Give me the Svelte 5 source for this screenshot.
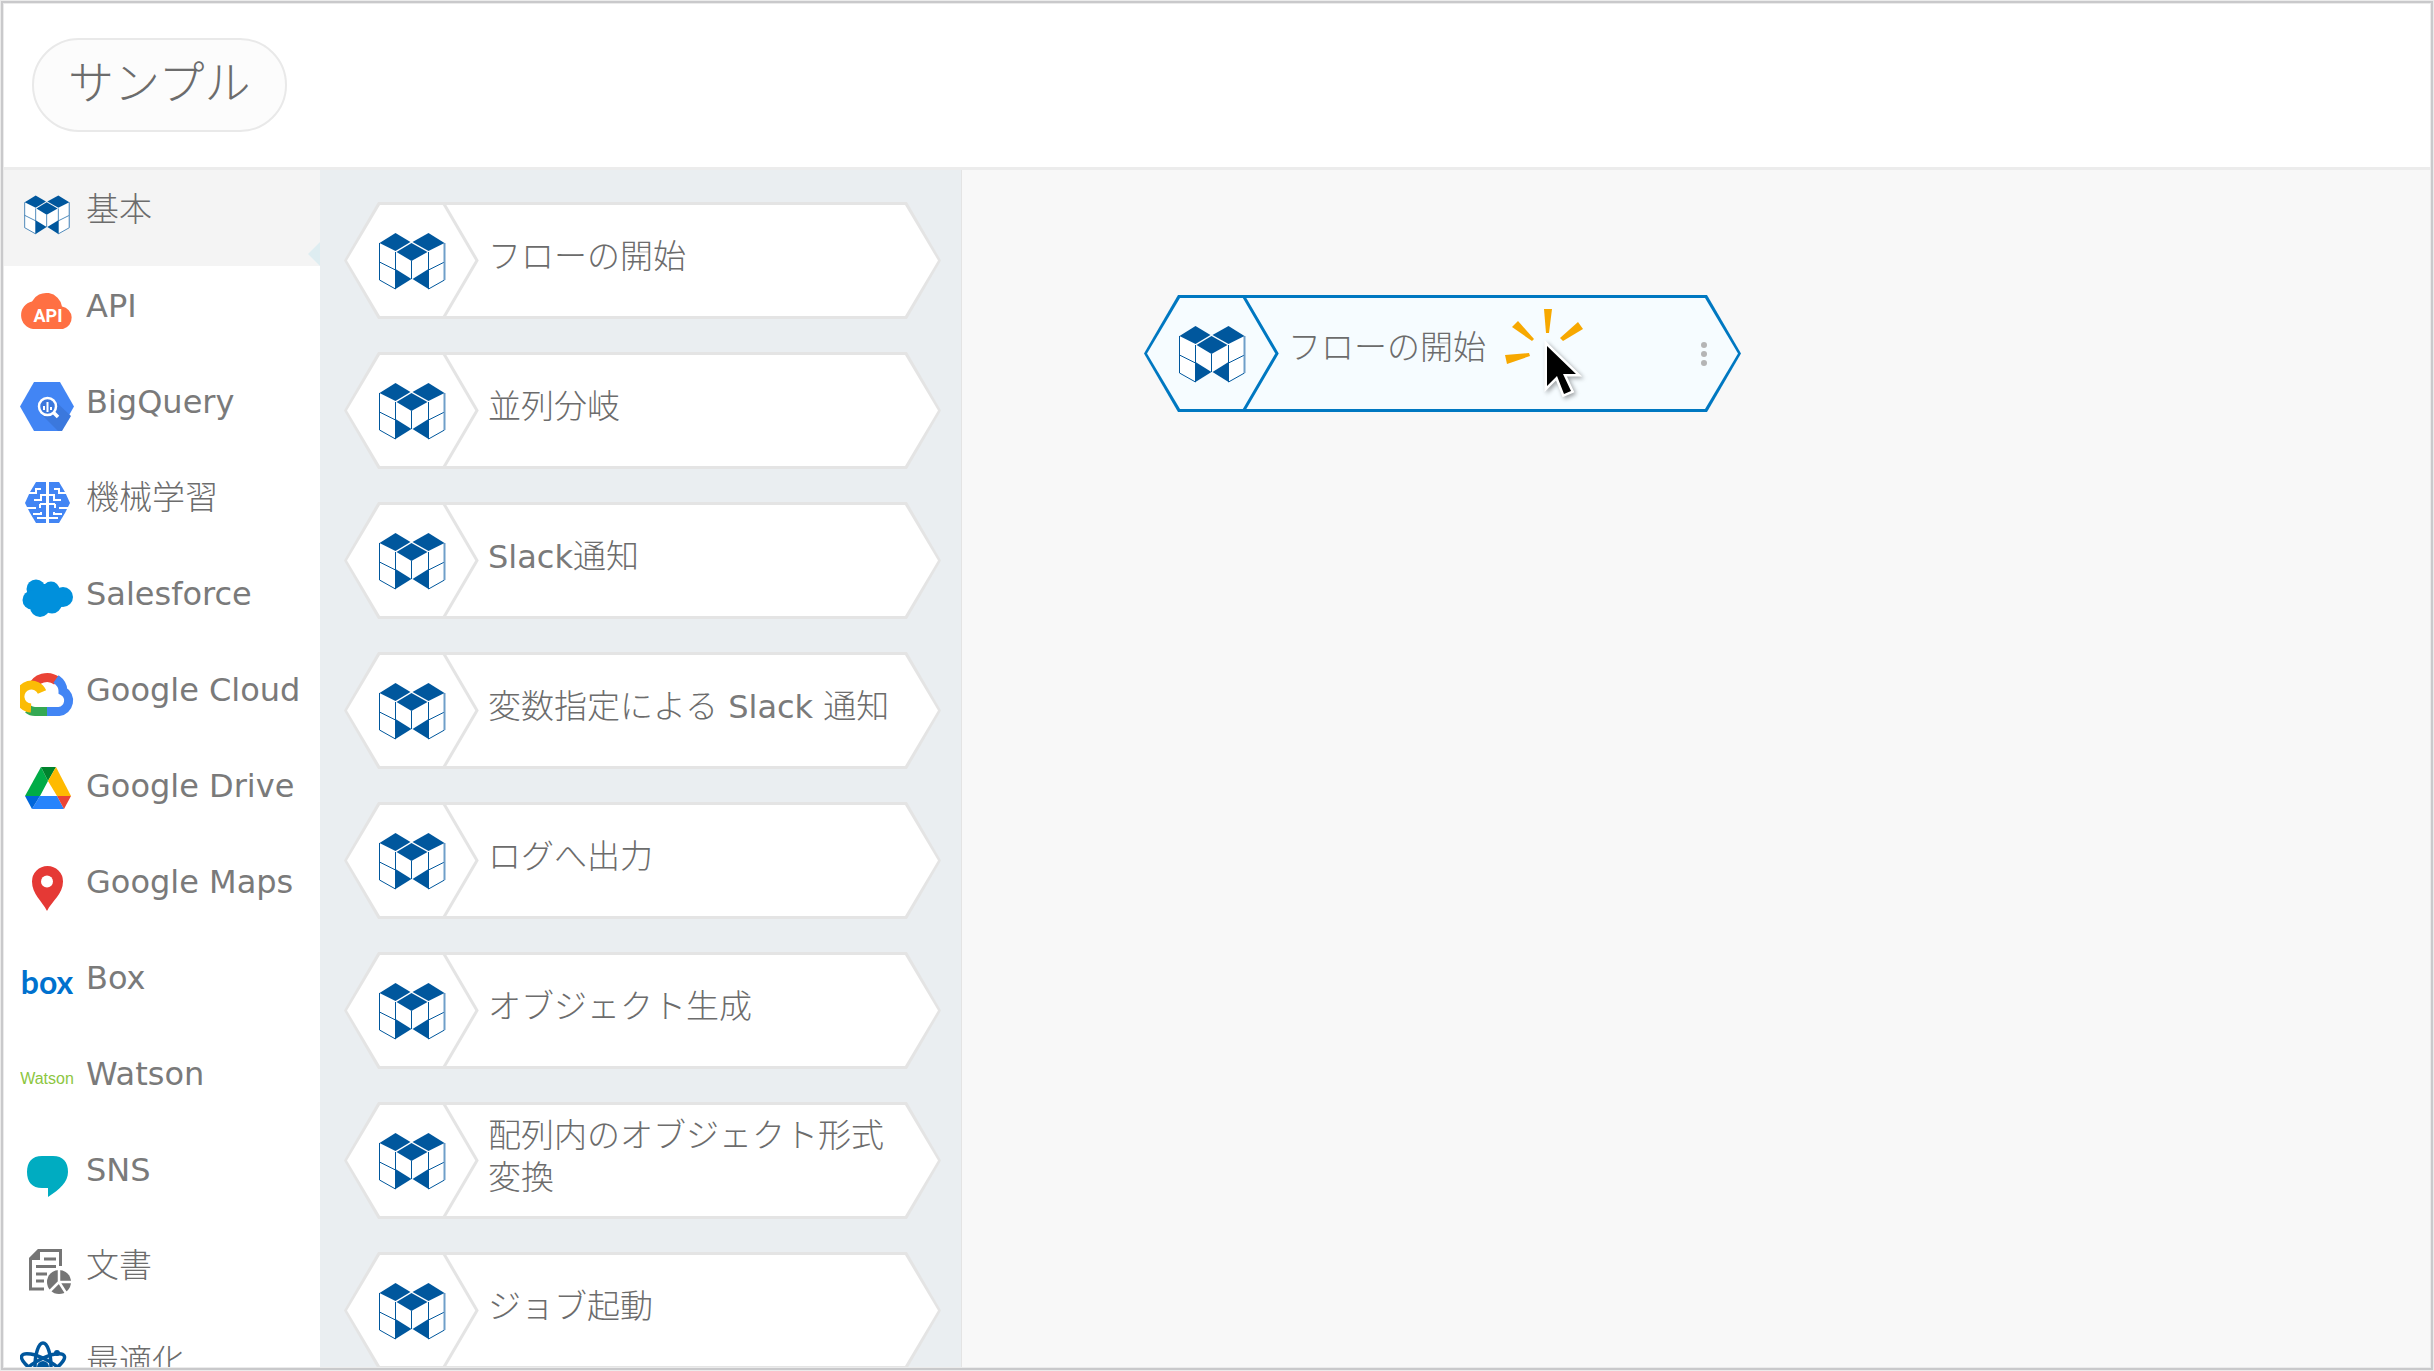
<script>
    const categories = [
        { icon: 'cubes', label: '基本' },
        { icon: 'api', label: 'API' },
        { icon: 'bigquery', label: 'BigQuery' },
        { icon: 'brain', label: '機械学習' },
        { icon: 'salesforce', label: 'Salesforce' },
        { icon: 'gcloud', label: 'Google Cloud' },
        { icon: 'gdrive', label: 'Google Drive' },
        { icon: 'gmaps', label: 'Google Maps' },
        { icon: 'box', label: 'Box' },
        { icon: 'watson', label: 'Watson' },
        { icon: 'sns', label: 'SNS' },
        { icon: 'document', label: '文書' },
        { icon: 'atom', label: '最適化' }
    ];

    const blocks = [
        'フローの開始',
        '並列分岐',
        'Slack通知',
        '変数指定による Slack 通知',
        'ログへ出力',
        'オブジェクト生成',
        '配列内のオブジェクト形式変換',
        'ジョブ起動'
    ];

    let selected = $state('cubes');

    // odd parts are the Latin words
    const splitLatin = (text) => text.split(/([A-Za-z ]+)/);
</script>

{#snippet mixed(text)}
    {#each splitLatin(text) as part, i}{#if i % 2}<span class="latin">{part}</span>{:else}{part}{/if}{/each}
{/snippet}

{#snippet cubes()}
    <svg class="cubes" viewBox="-1 0 67 57" aria-hidden="true">
        <path fill="#fff" d="M0 10L32 19L65 10V47L49 56L32 46L16 56L0 47Z" />
        <g fill="none" stroke="#00579d" stroke-width="1">
            <path d="M0 10V47L16 56V19M0 29L16 37M32 28V46M49 19V56L65 47M65 29L49 37" />
            <path d="M65 10V47" stroke="#6f9fc9" stroke-width="2" />
        </g>
        <g fill="#00579d">
            <path d="M16 0L31 9L16 18L0 10Z" />
            <path d="M49 0L65 10L49 18L33 9Z" />
            <path d="M32 10L48 19L32 28L17 19Z" />
            <path d="M16 36L32 46L16 56Z" />
            <path d="M49 36L33 46L49 56Z" />
        </g>
    </svg>
{/snippet}

{#snippet block(label)}
    <svg class="block-shape" viewBox="0 0 597 117" aria-hidden="true">
        <path class="edge" d="M34 0H563L597 58.5L563 117H34L0 58.5Z" />
        <path class="face" d="M36 3H561L594 58.5L561 114H36L3 58.5Z" />
        <path class="divider" d="M100 2L133 58.5L100 115" />
    </svg>
    <span class="block-icon">{@render cubes()}</span>
    <span class="block-label">{@render mixed(label)}</span>
{/snippet}

{#snippet categoryIcon(name)}
    {#if name === 'cubes'}
        {@render cubes()}
    {:else}
        <svg viewBox="0 0 54 54" aria-hidden="true">
            {#if name === 'api'}
                <path fill="#ff7043" d="M13 45A14 14 0 0 1 12 17.5A16 16 0 0 1 42 22.5A11.5 11.5 0 0 1 43 45Z" />
                <text class="api-text" x="28" y="38" text-anchor="middle">API</text>
            {:else if name === 'bigquery'}
                <path fill="#4285f4" d="M14 2H40L54 26.5L40 51H14L0 26.5Z" />
                <path fill="#3b78dd" d="M34 20L51 36L42 51H38L20 33Z" />
                <circle cx="27.5" cy="26.5" r="8.5" fill="#3b78dd" stroke="#fff" stroke-width="2.5" />
                <path fill="none" stroke="#fff" stroke-width="2" d="M24 26V30M27.5 22V32M31 27V30" />
                <path fill="none" stroke="#fff" stroke-width="3.5" d="M33 32L38 37" />
            {:else if name === 'brain'}
                <path fill="#4285f4" d="M16 6H26V47H16L10 37L5 27L10 16Z" />
                <path fill="#4285f4" d="M29 6H39L45 16L50 27L45 37L39 47H29V6Z" />
                <path fill="none" stroke="#fff" stroke-width="2" d="M8 17H16V13H21M26 19H21V24H14M6 32H16M20 28H26M20 28V32M13 38H21V36M17 42H26M47 17H39V13H34M29 19H34V24H41M49 32H39M35 28H29M35 28V32M42 38H34V36M38 42H29" />
            {:else if name === 'salesforce'}
                <g fill="#0090dc">
                    <circle cx="16" cy="17" r="9.5" />
                    <circle cx="31" cy="18" r="8.5" />
                    <circle cx="43" cy="25" r="10" />
                    <circle cx="12" cy="28" r="9.5" />
                    <circle cx="20" cy="35" r="10" />
                    <circle cx="32" cy="32" r="9.5" />
                    <path d="M14 12L32 12L46 20L43 34L34 40L14 38Z" />
                </g>
            {:else if name === 'gcloud'}
                <g fill="none" stroke-width="9">
                    <path stroke="#ea4335" d="M12 20A16 16 0 0 1 37 13" />
                    <path stroke="#4285f4" d="M36 11Q43 16 43 23A11 11 0 0 1 39 43.5H27" />
                    <path stroke="#34a853" d="M27 43.5H15Q11 43.5 8 41" />
                    <path stroke="#fbbc05" d="M11 40A11.5 11.5 0 1 1 22 24" />
                </g>
            {:else if name === 'gdrive'}
                <path fill="#00ac47" d="M21 3L28 17L20 32H5Z" />
                <path fill="#00832d" d="M21 3H36L28 17Z" />
                <path fill="#ffba00" d="M36 3L51 32H37L28 17Z" />
                <path fill="#2684fc" d="M20 32H37L44 45H12Z" />
                <path fill="#0066da" d="M5 32H20L12 45Z" />
                <path fill="#ea4335" d="M37 32H51L44 45Z" />
            {:else if name === 'gmaps'}
                <path fill="#e53935" d="M27 51C22 41 12 34 12 21.5A15.5 15.5 0 0 1 43 21.5C43 34 32 41 27 51Z" />
                <circle cx="27" cy="21.5" r="6" fill="#fff" />
            {:else if name === 'box'}
                <text class="box-text" x="27" y="38" text-anchor="middle">box</text>
            {:else if name === 'watson'}
                <text class="watson-text" x="27" y="32" text-anchor="middle">Watson</text>
            {:else if name === 'sns'}
                <path fill="#00acc1" d="M22 8H33C43 8 48 14 48 24C48 34 40 41 28 49V40H22C12 40 7 34 7 24C7 14 12 8 22 8Z" />
            {:else if name === 'document'}
                <g fill="none" stroke="#757575" stroke-width="3">
                    <path d="M24 45H10.5V15L19 6.5H40.5V22" />
                    <path d="M24 15H36M16 22.5H36M16 30H27M16 37H24" />
                </g>
                <path fill="#757575" d="M9 16V14L18 5H20V16Z" />
                <circle cx="39" cy="38" r="12" fill="#757575" />
                <path fill="none" stroke="#fff" stroke-width="2.5" d="M39 25V38H52M39 38L30 47M39 38L46 49" />
            {:else}
                <g fill="none" stroke="#00579d" stroke-width="3.5">
                    <ellipse cx="23" cy="27" rx="24" ry="8" transform="rotate(90 23 27)" />
                    <ellipse cx="23" cy="27" rx="24" ry="8" transform="rotate(28 23 27)" />
                    <ellipse cx="23" cy="27" rx="24" ry="8" transform="rotate(152 23 27)" />
                </g>
                <circle cx="23" cy="27" r="6" fill="#00579d" />
                <circle cx="37" cy="13" r="3" fill="#00579d" />
            {/if}
        </svg>
    {/if}
{/snippet}

<div class="app">
    <header class="topbar">
        <button class="flow-name">サンプル</button>
    </header>
    <div class="workspace">
        <nav class="categories">
            {#each categories as category}
                <button class="category" class:active={selected === category.icon} onclick={() => (selected = category.icon)}>
                    <span class="category-icon">{@render categoryIcon(category.icon)}</span>
                    <span class="category-label">{@render mixed(category.label)}</span>
                </button>
            {/each}
        </nav>
        <div class="palette">
            {#each blocks as label}
                <button class="block">{@render block(label)}</button>
            {/each}
        </div>
        <main class="canvas">
            <div class="block node">
                {@render block('フローの開始')}
                <button class="node-menu" aria-label="メニュー">
                    <svg viewBox="0 0 8 26" aria-hidden="true">
                        <circle cx="4" cy="4" r="3" />
                        <circle cx="4" cy="13" r="3" />
                        <circle cx="4" cy="22" r="3" />
                    </svg>
                </button>
            </div>
            <svg class="pointer" viewBox="0 0 90 110" aria-hidden="true">
                <g fill="#f7a800">
                    <path d="M44 9H52L49 33H46Z" />
                    <path d="M12 27L18 21L34 39L32 41Z" />
                    <path d="M78 22L83 29L63 41L60 38Z" />
                    <path d="M5 55L29 53L30 56L7 64Z" />
                </g>
                <path class="arrow" d="M47 46V86L57 76L64 94L71 91L63 74H76Z" />
            </svg>
        </main>
    </div>
</div>

<style>
    :global(body) {
        background: #ebebeb;
    }
    .app {
        height: 100vh;
        box-sizing: border-box;
        display: flex;
        flex-direction: column;
        overflow: hidden;
        border: 3px solid #c9c9cb;
        outline: 1px solid #ebebeb;
        outline-offset: -1px;
        padding: 1px;
        font-family: "Noto Sans CJK JP", sans-serif;
        font-size: 33px;
        font-weight: 300;
        line-height: 42px;
        color: #6c6c6c;
    }
    button {
        font: inherit;
        color: inherit;
        border: 0;
        background: none;
        padding: 0;
        text-align: left;
        cursor: pointer;
    }
    svg {
        display: block;
    }
    .latin {
        font-family: "DejaVu Sans", sans-serif;
        font-size: 32px;
        font-weight: 400;
        line-height: 1;
        color: #7a7a7a;
    }
    .topbar {
        flex: none;
        display: flex;
        align-items: center;
        height: 166px;
        box-sizing: border-box;
        padding: 0 28px 2px;
        background: #fff;
        border-bottom: 3px solid #ececec;
    }
    .flow-name {
        height: 94px;
        padding: 0 34px 12px;
        border: 2px solid #e9e9e9;
        border-radius: 48px;
        background: #fcfcfc;
        font-size: 46px;
    }
    .workspace {
        flex: 1;
        min-height: 0;
        display: flex;
    }
    .categories {
        flex: none;
        width: 316px;
        overflow: hidden;
        background: #fff;
    }
    .category {
        position: relative;
        display: flex;
        gap: 12px;
        width: 100%;
        height: 96px;
        padding: 16px 0 0 16px;
        white-space: nowrap;
    }
    .category.active {
        background: #f4f4f4;
    }
    .category.active::after {
        content: '';
        position: absolute;
        right: 0;
        bottom: 0;
        border: 12px solid transparent;
        border-left: 0;
        border-right-color: #deedf1;
    }
    .category-icon {
        display: flex;
        align-items: center;
        justify-content: center;
        width: 54px;
        height: 54px;
        margin-top: 2px;
    }
    .category-icon svg {
        width: 54px;
        height: 54px;
    }
    .category-icon .cubes {
        width: 46px;
        height: 40px;
    }
    .api-text {
        font: 700 18px Roboto, sans-serif;
        fill: #fff;
    }
    .box-text {
        font: 700 32px Lato, sans-serif;
        fill: #0071ce;
    }
    .watson-text {
        font: 16px "Liberation Sans", sans-serif;
        fill: #8cc63f;
    }
    .palette {
        flex: none;
        display: flex;
        flex-direction: column;
        gap: 33px;
        box-sizing: border-box;
        width: 642px;
        padding: 32px 20px 0 24px;
        overflow: hidden;
        background: #eaeef1;
        border-right: 1px solid #e4e4e4;
    }
    .block {
        position: relative;
        flex: none;
        display: flex;
        align-items: center;
        width: 597px;
        height: 117px;
    }
    .block-shape {
        position: absolute;
        inset: 0;
    }
    .block-shape .edge {
        fill: #e4e4e4;
    }
    .block-shape .face {
        fill: #fff;
    }
    .block-shape .divider {
        fill: none;
        stroke: #e4e4e4;
        stroke-width: 3px;
    }
    .block-icon {
        position: relative;
        flex: none;
        padding: 2px 42px 0 34px;
    }
    .block-icon .cubes {
        width: 68px;
        height: 57px;
    }
    .block-label {
        position: relative;
        flex: 1;
        padding: 0 32px 14px 0;
    }
    .canvas {
        position: relative;
        flex: 1;
        background: #f8f8f8;
    }
    .node {
        position: absolute;
        left: 182px;
        top: 125px;
    }
    .node .block-label {
        padding-bottom: 18px;
    }
    .node .edge {
        fill: #0078c1;
    }
    .node .face {
        fill: #f6fcff;
    }
    .node .divider {
        stroke: #0078c1;
    }
    .node-menu {
        position: relative;
        padding: 0 33px 0 0;
    }
    .node-menu svg {
        width: 8px;
        height: 26px;
        fill: #b5b5b5;
    }
    .pointer {
        position: absolute;
        left: 538px;
        top: 130px;
        width: 90px;
        height: 110px;
    }
    .arrow {
        fill: #000;
        stroke: #fff;
        stroke-width: 5px;
        paint-order: stroke;
        filter: drop-shadow(2px 2px 2px rgba(0, 0, 0, 0.35));
    }
</style>
